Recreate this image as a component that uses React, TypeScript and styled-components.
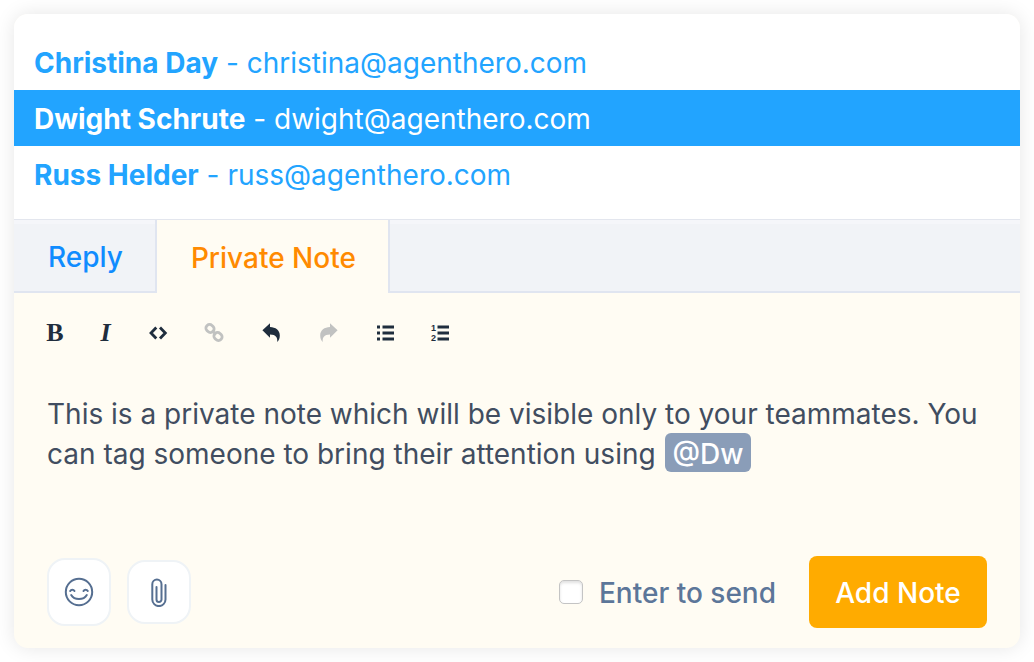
import React, { useState } from "react";
import styled, { createGlobalStyle, css } from "styled-components";

const GlobalStyle = createGlobalStyle`
  * { box-sizing: border-box; }
  body { margin: 0; background: #ffffff; }
  button, input { font: inherit; margin: 0; }
`;

const Card = styled.main`
  margin: 14px;
  border-radius: 14px;
  overflow: hidden;
  background: #fffcf3;
  box-shadow: 0 0 20px rgba(0, 0, 0, 0.1);
  font-family: Inter, "Liberation Sans", sans-serif;
  font-size: 28px;
`;

const People = styled.ul`
  list-style: none;
  margin: 0;
  padding: 20px 0 17px;
  background: #ffffff;
  border-bottom: 1px solid #e3e6ee;
`;

const Person = styled.button<{ $active?: boolean }>`
  display: block;
  width: 100%;
  height: 56px;
  padding: 2px 20px 0;
  border: 0;
  text-align: left;
  white-space: pre;
  font-weight: 400;
  color: ${(p) => (p.$active ? "#ffffff" : "#22a4ff")};
  background: ${(p) => (p.$active ? "#22a4ff" : "transparent")};
  strong { font-weight: 700; }
`;

const Tabs = styled.div`
  display: flex;
  height: 73px;
  background: linear-gradient(#f5f6fa 4px, #f1f3f7 4px);
`;

const TabFiller = styled.div`
  flex: 1;
  border-bottom: 2px solid #e0e5f0;
`;

const Tab = styled.button<{ $active?: boolean }>`
  padding: 2px 32px 0 34px;
  border: 0;
  border-right: 2px solid #e0e5f0;
  font-weight: 500;
  ${(p) =>
    p.$active
      ? css`color: #ff8a00; background: #fffcf3;`
      : css`color: #108cff; background: transparent; border-bottom: 2px solid #e0e5f0;`}
`;

const Composer = styled.section`
  padding: 24px 33px 20px;
`;

const Toolbar = styled.div`
  display: flex;
  align-items: center;
  gap: 37px;
  height: 32px;
`;

const Tool = styled.button<{ $width: number }>`
  display: flex;
  align-items: center;
  justify-content: center;
  width: ${(p) => p.$width}px;
  height: 32px;
  padding: 0;
  border: 0;
  background: none;
  color: #1f2d3d;
  &:disabled { color: #c1c2c1; }
  svg { flex: none; overflow: visible; }
`;

const Letter = styled.span<{ $italic?: boolean }>`
  font: ${(p) => (p.$italic ? "italic" : "normal")} 700 26px/32px "Liberation Serif", serif;
`;

const Editor = styled.div`
  margin-top: 45px;
  min-height: 162px;
  line-height: 40px;
  color: #414d60;
  outline: none;
`;

const Mention = styled.span`
  padding: 4px 8px 1px;
  margin-left: 1px;
  border-radius: 6px;
  font-weight: 500;
  color: #ffffff;
  background: #8a9db8;
`;

const Footer = styled.footer`
  display: flex;
  align-items: center;
  gap: 16px;
`;

const IconButton = styled.button<{ $tall?: boolean }>`
  display: flex;
  align-items: center;
  justify-content: center;
  width: 64px;
  height: ${(p) => (p.$tall ? 68 : 64)}px;
  padding: 0;
  border: 2px solid #eff3f6;
  border-radius: 18px;
  background: #ffffff;
  color: #566f91;
`;

const SendOption = styled.label`
  display: flex;
  align-items: center;
  gap: 16px;
  margin-left: auto;
  margin-right: 17px;
  font-weight: 500;
  color: #5c7699;
  span { padding-top: 2px; }
`;

const Checkbox = styled.input`
  appearance: none;
  width: 24px;
  height: 24px;
  border: 1px solid #c4c4c4;
  border-radius: 5px;
  background: #ffffff;
  box-shadow: inset 0 2px 3px rgba(0, 0, 0, 0.12);
  &:checked { background: #22a4ff; }
`;

const Submit = styled.button`
  width: 178px;
  height: 72px;
  padding: 2px 0 0;
  border: 0;
  border-radius: 8px;
  font-weight: 500;
  color: #ffffff;
  background: #ffab00;
`;

const CodeIcon = () => (
  <svg width="18" height="14" viewBox="0 0 18 14" fill="none" stroke="currentColor" strokeWidth="2.8" aria-hidden="true">
    <path d="M7.300 1.500 2 7l5.300 5.500M11 1.500 16.300 7 11 12.500" />
  </svg>
);

const LinkIcon = () => (
  <svg width="18" height="18" viewBox="0 0 18 18" fill="none" stroke="currentColor" strokeWidth="2.800" aria-hidden="true">
    <rect x="-4.200" y="-3.600" width="8.400" height="7.200" rx="3.400" transform="translate(5 4.500) rotate(45)" />
    <rect x="-4.200" y="-3.600" width="8.400" height="7.200" rx="3.400" transform="translate(13 12.500) rotate(45)" />
    <path d="m7 6.500 4 4" />
  </svg>
);

const CurvedArrow = ({ flip }: { flip?: boolean }) => (
  <svg width="18" height="20" viewBox="0 0 18 20" fill="currentColor" aria-hidden="true">
    <path
      transform={flip ? "matrix(-1 0 0 1 18 0)" : undefined}
      d="M.400 7.200 8 .200V4c5.600.200 9.800 3.200 9.800 8.400 0 2.800-.900 5-2.600 6.600.600-4.500-1.200-7.300-7.200-7.500v3.200Z"
    />
  </svg>
);

const ListIcon = ({ numbered }: { numbered?: boolean }) => (
  <svg width="18" height="18" viewBox="0 0 18 18" fill="currentColor" aria-hidden="true">
    <path d="M6.500 1.500H18v3H6.500zM6.500 7.500H18v3H6.500zM6.500 13.500H18v3H6.500z" />
    {numbered ? (
      <g fontFamily="Liberation Sans, sans-serif" fontWeight="700" fontSize="9">
        <text x="0" y="7">1</text>
        <text x="0" y="17">2</text>
      </g>
    ) : (
      <path d="M1 1.500h3v3H1zM1 7.500h3v3H1zM1 13.500h3v3H1z" />
    )}
  </svg>
);

const SmileIcon = () => (
  <svg width="30" height="30" viewBox="0 0 30 30" fill="none" stroke="currentColor" strokeWidth="2" strokeLinecap="round" aria-hidden="true">
    <circle cx="15" cy="15" r="13.200" />
    <path d="M6.200 14c.900-1.700 3.300-1.700 4.300 0M19.500 14c.900-1.700 3.300-1.700 4.300 0M7.200 18c3.200 5.400 12.400 5.400 15.600 0" />
  </svg>
);

const ClipIcon = () => (
  <svg width="16" height="30" viewBox="0 0 16 30" fill="none" stroke="currentColor" strokeWidth="2" strokeLinecap="round" aria-hidden="true">
    <path d="M14.500 8V22.500a6.600 6.600 0 0 1-13.200 0V7.200a4.600 4.600 0 0 1 9.200 0V22.500a2.500 2.500 0 0 1-5 0V10" />
  </svg>
);

const people = [
  { name: "Christina Day", email: "christina@agenthero.com" },
  { name: "Dwight Schrute", email: "dwight@agenthero.com" },
  { name: "Russ Helder", email: "russ@agenthero.com" },
];

export default function App() {
  const [enterToSend, setEnterToSend] = useState(false);
  return (
    <>
      <GlobalStyle />
      <Card>
        <People aria-label="Teammates">
          {people.map((p, i) => (
            <li key={p.email}>
              <Person type="button" $active={i === 1}>
                <strong>{p.name}</strong> - {p.email}
              </Person>
            </li>
          ))}
        </People>
        <Tabs role="tablist">
          <Tab type="button" role="tab" aria-selected={false}>Reply</Tab>
          <Tab type="button" role="tab" aria-selected $active>Private Note</Tab>
          <TabFiller />
        </Tabs>
        <Composer>
          <Toolbar role="toolbar" aria-label="Formatting">
            <Tool type="button" aria-label="Bold" $width={16}><Letter>B</Letter></Tool>
            <Tool type="button" aria-label="Italic" $width={11}><Letter $italic>I</Letter></Tool>
            <Tool type="button" aria-label="Code" $width={20}><CodeIcon /></Tool>
            <Tool type="button" aria-label="Link" $width={18} disabled><LinkIcon /></Tool>
            <Tool type="button" aria-label="Undo" $width={22}><CurvedArrow /></Tool>
            <Tool type="button" aria-label="Redo" $width={20} disabled><CurvedArrow flip /></Tool>
            <Tool type="button" aria-label="Bulleted list" $width={18}><ListIcon /></Tool>
            <Tool type="button" aria-label="Numbered list" $width={18}><ListIcon numbered /></Tool>
          </Toolbar>
          <Editor role="textbox" aria-multiline="true" aria-label="Private note" contentEditable suppressContentEditableWarning spellCheck={false}>
            This is a private note which will be visible only to your teammates. You can tag someone to bring their attention using <Mention>@Dw</Mention>
          </Editor>
          <Footer>
            <IconButton type="button" aria-label="Insert emoji" $tall><SmileIcon /></IconButton>
            <IconButton type="button" aria-label="Attach file"><ClipIcon /></IconButton>
            <SendOption>
              <Checkbox type="checkbox" checked={enterToSend} onChange={(e) => setEnterToSend(e.target.checked)} />
              <span>Enter to send</span>
            </SendOption>
            <Submit type="button">Add Note</Submit>
          </Footer>
        </Composer>
      </Card>
    </>
  );
}
